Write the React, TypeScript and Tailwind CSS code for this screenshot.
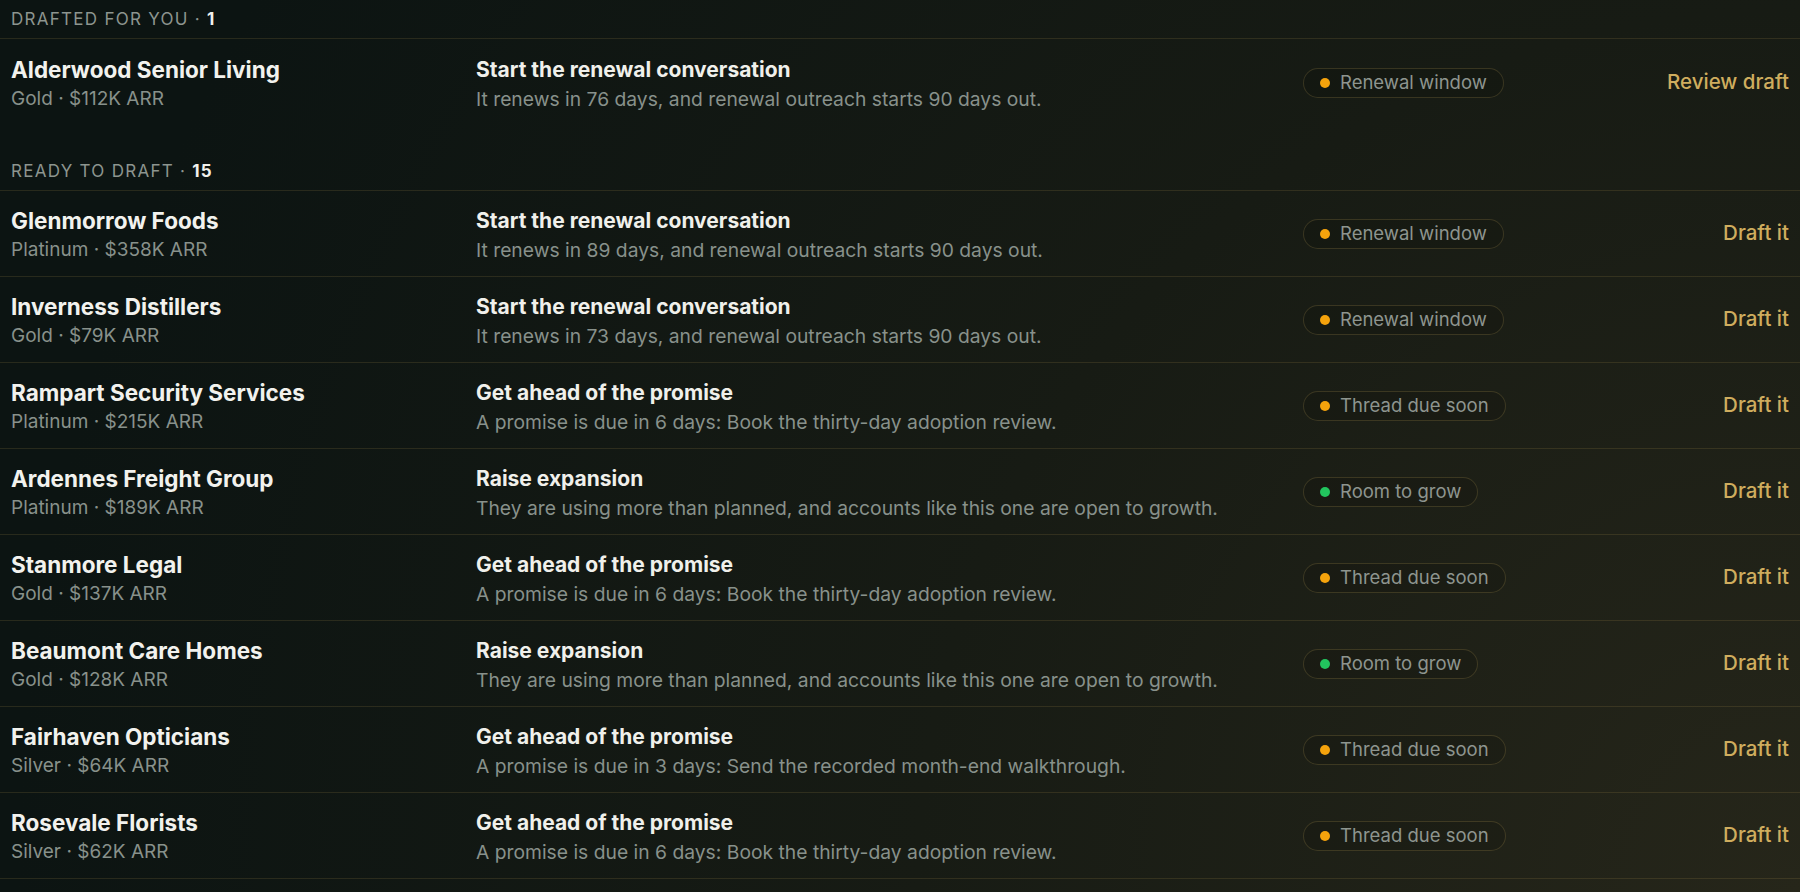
import type { ReactNode } from 'react';

type Tone = 'amber' | 'green';

interface Opportunity {
    name: string;
    tier: string;
    arr: string;
    title: string;
    detail: string;
    signal: string;
    tone: Tone;
}

const drafted: Opportunity[] = [
    {
        name: 'Alderwood Senior Living',
        tier: 'Gold',
        arr: '$112K',
        title: 'Start the renewal conversation',
        detail: 'It renews in 76 days, and renewal outreach starts 90 days out.',
        signal: 'Renewal window',
        tone: 'amber'
    }
];

const ready: Opportunity[] = [
    {
        name: 'Glenmorrow Foods',
        tier: 'Platinum',
        arr: '$358K',
        title: 'Start the renewal conversation',
        detail: 'It renews in 89 days, and renewal outreach starts 90 days out.',
        signal: 'Renewal window',
        tone: 'amber'
    },
    {
        name: 'Inverness Distillers',
        tier: 'Gold',
        arr: '$79K',
        title: 'Start the renewal conversation',
        detail: 'It renews in 73 days, and renewal outreach starts 90 days out.',
        signal: 'Renewal window',
        tone: 'amber'
    },
    {
        name: 'Rampart Security Services',
        tier: 'Platinum',
        arr: '$215K',
        title: 'Get ahead of the promise',
        detail: 'A promise is due in 6 days: Book the thirty-day adoption review.',
        signal: 'Thread due soon',
        tone: 'amber'
    },
    {
        name: 'Ardennes Freight Group',
        tier: 'Platinum',
        arr: '$189K',
        title: 'Raise expansion',
        detail: 'They are using more than planned, and accounts like this one are open to growth.',
        signal: 'Room to grow',
        tone: 'green'
    },
    {
        name: 'Stanmore Legal',
        tier: 'Gold',
        arr: '$137K',
        title: 'Get ahead of the promise',
        detail: 'A promise is due in 6 days: Book the thirty-day adoption review.',
        signal: 'Thread due soon',
        tone: 'amber'
    },
    {
        name: 'Beaumont Care Homes',
        tier: 'Gold',
        arr: '$128K',
        title: 'Raise expansion',
        detail: 'They are using more than planned, and accounts like this one are open to growth.',
        signal: 'Room to grow',
        tone: 'green'
    },
    {
        name: 'Fairhaven Opticians',
        tier: 'Silver',
        arr: '$64K',
        title: 'Get ahead of the promise',
        detail: 'A promise is due in 3 days: Send the recorded month-end walkthrough.',
        signal: 'Thread due soon',
        tone: 'amber'
    },
    {
        name: 'Rosevale Florists',
        tier: 'Silver',
        arr: '$62K',
        title: 'Get ahead of the promise',
        detail: 'A promise is due in 6 days: Book the thirty-day adoption review.',
        signal: 'Thread due soon',
        tone: 'amber'
    }
];

function SectionHeader({ label, count }: { label: string; count: number }) {
    return (
        <div className="h-[39px] flex items-center pt-[1px] px-[11px] border-b border-[#c8aa5a]/15">
            <span className="text-[17px] uppercase tracking-[0.075em] text-[#8d958f]">
                {label} · <span className="font-bold text-[#f1f1ec]">{count}</span>
            </span>
        </div>
    );
}

function Signal({ tone, children }: { tone: Tone; children: ReactNode }) {
    return (
        <span className="inline-flex items-center gap-[10px] h-[30px] pl-[16px] pr-[16px] rounded-full border border-[#c8aa5a]/20 bg-black/10 text-[18.5px] text-[#8e958f]">
            <span className={`w-[10px] h-[10px] rounded-full ${tone === 'green' ? 'bg-[#22c55e]' : 'bg-[#f5a30c]'}`} />
            {children}
        </span>
    );
}

function Row({ item, action, divider }: { item: Opportunity; action: string; divider: boolean }) {
    return (
        <div className={`h-[86px] flex items-center px-[11px] ${divider ? 'border-b border-[#c8aa5a]/15' : ''}`}>
            <div className="w-[465px] shrink-0 pt-[4px]">
                <p className="text-[22.5px] leading-[29px] font-bold text-[#f2f2ee]">{item.name}</p>
                <p className="text-[19px] leading-[30px] text-[#88918b]">
                    {item.tier} · {item.arr} ARR
                </p>
            </div>
            <div className="flex-1 min-w-0 pt-[4px]">
                <p className="text-[21px] leading-[29px] font-bold text-[#f0f0eb]">{item.title}</p>
                <p className="text-[19.3px] leading-[30px] text-[#88918b]">{item.detail}</p>
            </div>
            <div className="w-[306px] shrink-0 pt-[1px]">
                <Signal tone={item.tone}>{item.signal}</Signal>
            </div>
            <button className="w-[180px] shrink-0 text-right text-[20.5px] font-medium text-[#cfad5e]">{action}</button>
        </div>
    );
}

export default function App() {
    return (
        <div
            className="h-[892px] overflow-hidden bg-[radial-gradient(circle_2100px_at_100%_100%,#26261a_0%,#171b14_42%,#0c1412_85%)]"
            style={{ fontFamily: 'Inter, "Noto Sans", sans-serif' }}
        >
            <SectionHeader label="Drafted for you" count={1} />
            {drafted.map((item, i) => (
                <Row key={item.name} item={item} action="Review draft" divider={i < drafted.length - 1} />
            ))}
            <div className="h-[27px]" />
            <SectionHeader label="Ready to draft" count={15} />
            {ready.map((item) => (
                <Row key={item.name} item={item} action="Draft it" divider />
            ))}
        </div>
    );
}
